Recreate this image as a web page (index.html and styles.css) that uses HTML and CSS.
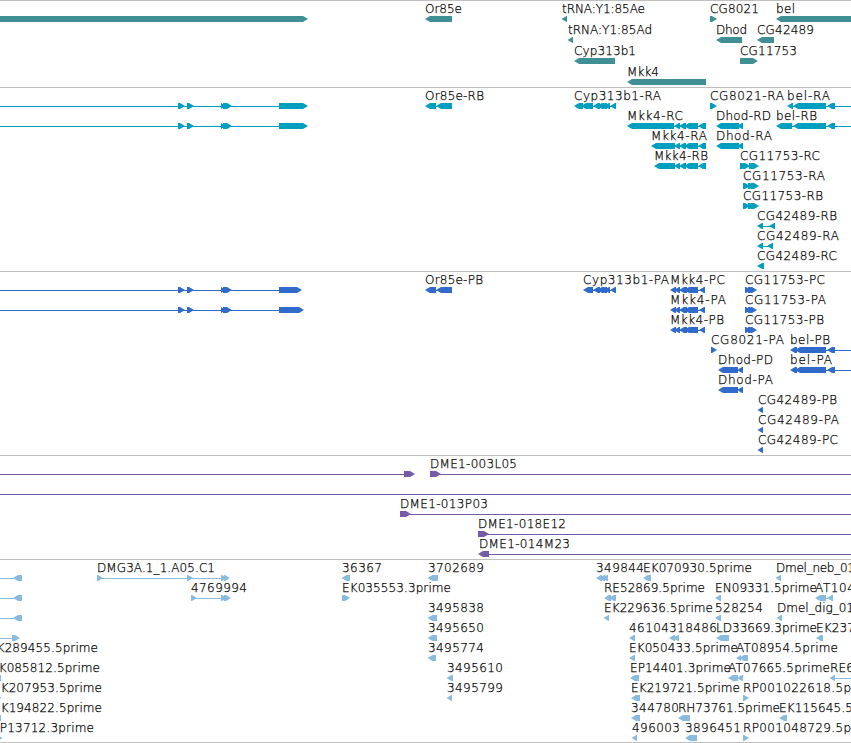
FILE: index.html
```
<!DOCTYPE html>
<html lang="en">
<head>
    <meta charset="UTF-8">
    <meta name="viewport" content="width=device-width, initial-scale=1.0">
    <title>Genome Browser</title>
    <link rel="stylesheet" href="styles.css">
</head>
<body>
    <main class="browser">
        <section class="track genes"><svg id="genes" width="851" height="86"></svg></section>
        <section class="track transcripts"><svg id="transcripts" width="851" height="183"></svg></section>
        <section class="track proteins"><svg id="proteins" width="851" height="183"></svg></section>
        <section class="track clones"><svg id="clones" width="851" height="103"></svg></section>
        <section class="track ests"><svg id="ests" width="851" height="182"></svg></section>
    </main>
    <script src="tracks.js"></script>
</body>
</html>
```

FILE: styles.css
```
body {
    margin: 0;
    background: #fff;
    overflow: hidden;
}
.browser {
    display: flex;
    flex-direction: column;
    width: 851px;
}
.track {
    border-top: 1px solid #bfbfbf;
}
.track:last-child {
    border-bottom: 1px solid #bfbfbf;
}
.track svg {
    display: block;
    overflow: hidden;
}
.label {
    font-family: "DejaVu Sans", sans-serif;
    font-size: 12px;
    font-weight: 200;
    fill: #000;
    stroke: #000;
    stroke-width: 0.25px;
}
.genes {
    color: #3f8f94;
}
.transcripts {
    color: #009fbf;
}
.proteins {
    color: #306acb;
}
.clones {
    color: #7659a9;
}
.ests {
    color: #88bbdd;
}
.exon, .intron {
    fill: currentColor;
}
```

FILE: tracks.js
```
// feature: [row, direction, exons, label, label start, label end, line start, line end]
const END = 860;
const small = [[178, 185], [187, 194], [221, 226], [223, 232]];
const mkkR = [[674, 680], [679, 686], [684, 698], [698, 706]];
const mkkP = [[670, 676], [674, 680], [679, 687], [684, 698], [699, 705]];
const cgR = [[743, 750], [748, 755], [751, 759]];
const cgP = [[745, 751], [748, 755], [751, 757]];

const tracks = {
    genes: [
        [0, ">", [[-10, 308]]],
        [0, "<", [[425, 452]], "Or85e", 425, 462],
        [0, "<", [[561.5, 567]], "tRNA:Y1:85Ae", 562, 645],
        [0, ">", [[710, 717]], "CG8021", 710, 759],
        [0, "<", [[776, END]], "bel", 776, 795],
        [1, "<", [[567.5, 573]], "tRNA:Y1:85Ad", 568, 652],
        [1, "<", [[716, 742]], "Dhod", 716, 747],
        [1, "<", [[757, 774]], "CG42489", 757, 814],
        [2, "<", [[574, 615]], "Cyp313b1", 574, 636],
        [2, ">", [[740, 758]], "CG11753", 740, 797],
        [3, "<", [[627, 706]], "Mkk4", 627, 659]
    ],
    transcripts: [
        [0, ">", [...small, [279, 308]], "", 0, 0, -10, 279],
        [1, ">", [...small, [279, 308]], "", 0, 0, -10, 279],
        [0, "<", [[425, 436], [436, 452]], "Or85e-RB", 425, 484, 430, 440],
        [0, "<", [[574, 583], [581, 593], [593, 600], [597, 604], [600, 607], [604, 610], [610, 616]], "Cyp313b1-RA", 574, 661, 576, 614],
        [0, ">", [[710, 717]], "CG8021-RA", 710, 784],
        [0, "<", [[787, 793], [793, 826], [827, 835]], "bel-RA", 787, 830, 790, END],
        [1, "<", [[627, 674], ...mkkR], "Mkk4-RC", 627, 683, 670, 704],
        [1, "<", [[716, 739], [737, 743]], "Dhod-RD", 716, 771],
        [1, "<", [[776, 792], [793, 826], [827, 835]], "bel-RB", 776, 817, 780, END],
        [2, "<", [[651, 675], ...mkkR], "Mkk4-RA", 651, 707, 670, 704],
        [2, "<", [[716, 739], [737, 743]], "Dhod-RA", 716, 772],
        [3, "<", [[654, 675], ...mkkR], "Mkk4-RB", 654, 708, 670, 704],
        [3, ">", [[740, 747], [743, 750], [749, 755], [751, 759]], "CG11753-RC", 740, 820, 740, 756],
        [4, ">", cgR, "CG11753-RA", 743, 825],
        [5, ">", cgR, "CG11753-RB", 743, 823],
        [6, "<", [[757, 763], [769, 775]], "CG42489-RB", 757, 837, 760, 772],
        [7, "<", [[757, 763], [767, 773]], "CG42489-RA", 757, 839, 760, 770],
        [8, "<", [[757, 764]], "CG42489-RC", 757, 837]
    ],
    proteins: [
        [0, ">", [...small, [279, 302]], "", 0, 0, -10, 279],
        [1, ">", [...small, [279, 304]], "", 0, 0, -10, 279],
        [0, "<", [[425, 436], [436, 452]], "Or85e-PB", 425, 483, 430, 440],
        [0, "<", [[583, 593], [593, 600], [597, 604], [600, 607], [604, 610], [610, 616]], "Cyp313b1-PA", 583, 669, 585, 614],
        [0, "<", mkkP, "Mkk4-PC", 670, 725, 672, 704],
        [1, "<", mkkP, "Mkk4-PA", 670, 726, 672, 704],
        [2, "<", mkkP, "Mkk4-PB", 670, 724, 672, 704],
        [0, ">", cgP, "CG11753-PC", 745, 825],
        [1, ">", cgP, "CG11753-PA", 745, 826],
        [2, ">", cgP, "CG11753-PB", 745, 824],
        [3, ">", [[711, 717]], "CG8021-PA", 711, 784],
        [3, "<", [[790, 797], [795, 826], [827, 835]], "bel-PB", 790, 830, 793, END],
        [4, "<", [[718, 738], [737, 743]], "Dhod-PD", 718, 773],
        [4, "<", [[790, 797], [795, 826], [827, 835]], "bel-PA", 790, 832, 793, END],
        [5, "<", [[718, 738], [737, 743]], "Dhod-PA", 718, 773],
        [6, "<", [[757.5, 763]], "CG42489-PB", 758, 837],
        [7, "<", [[757.5, 763]], "CG42489-PA", 758, 839],
        [8, "<", [[757.5, 763]], "CG42489-PC", 758, 838]
    ],
    clones: [
        [0, ">", [[404, 415]], "", 0, 0, -10, 405],
        [0, ">", [[430, 441]], "DME1-003L05", 430, 517, 436, END],
        [1, ">", [], "", 0, 0, -10, END],
        [2, ">", [[400, 411]], "DME1-013P03", 400, 488, 406, END],
        [3, ">", [[478, 489]], "DME1-018E12", 478, 566, 484, END],
        [4, "<", [[478, 489]], "DME1-014M23", 479, 570, 485, END]
    ],
    ests: [
        [0, "<", [[13, 22]], "", 0, 0, -10, 16],
        [1, "<", [[13, 22]], "", 0, 0, -10, 16],
        [2, "<", [[13, 22]], "", 0, 0, -10, 16],
        [3, ">", [[12, 20]], "", 0, 0, -10, 14],
        [0, ">", [[97, 103], [187, 193], [221, 227], [224, 230]], "DMG3A.1_1.A05.C1", 97, 215, 98, 228],
        [1, ">", [[191, 197], [221, 227], [224, 231]], "4769994", 191, 247, 192, 228],
        [0, "<", [[341.5, 350]], "36367", 342, 382],
        [1, ">", [[342, 350]], "EK035553.3prime", 342, 451],
        [0, "<", [[427.5, 438]], "3702689", 428, 484],
        [2, "<", [[427.5, 437]], "3495838", 428, 484],
        [3, "<", [[427.5, 437]], "3495650", 428, 484],
        [4, "<", [[427.5, 436]], "3495774", 428, 484],
        [5, "<", [[446.5, 453]], "3495610", 447, 503],
        [6, "<", [[446.5, 452]], "3495799", 447, 503],
        [4, "<", [], "EK289455.5prime", -11, 98],
        [5, "<", [[-5, 1]], "EK085812.5prime", -9, 100],
        [6, ">", [[-5, 1.5]], "EK207953.5prime", -7, 102],
        [7, "<", [[-5, 1]], "EK194822.5prime", -7, 102],
        [8, ">", [[-5, 2.5]], "EP13712.3prime", -8, 94],
        [0, "<", [[596, 602], [599, 605], [602, 608]], "349844", 596, 644],
        [0, "<", [[643, 651]], "EK070930.5prime", 643, 752],
        [0, "<", [[775.5, 781]], "Dmel_neb_01", 776, 855],
        [1, "<", [[604, 611], [609, 616]], "RE52869.5prime", 604, 705],
        [1, "<", [[715, 721]], "EN09331.5prime", 715, 817],
        [1, "<", [[815, 826], [827, 833]], "AT104", 815, 855, 820, 830],
        [2, "<", [[603.5, 609]], "EK229636.5prime", 604, 713],
        [2, "<", [[715, 721]], "528254", 715, 763],
        [2, "<", [[776.5, 782]], "Dmel_dig_01", 777, 854],
        [3, "<", [[629, 635]], "46104", 629, 669],
        [3, "<", [[669, 675], [673, 679]], "318486", 669, 717],
        [3, "<", [[716, 729]], "LD33669.3prime", 716, 817],
        [3, "<", [[816, 823]], "EK237", 816, 855],
        [4, "<", [[629, 635]], "EK050433.5prime", 629, 738],
        [4, "<", [[736, 741], [739, 748]], "AT08954.5prime", 736, 838],
        [5, "<", [[630, 639]], "EP14401.3prime", 630, 731],
        [5, "<", [[728, 738], [737, 743]], "AT07665.5prime", 728, 830],
        [5, "<", [[829.5, 835]], "RE6", 830, 854, 833, END],
        [6, "<", [[631, 640]], "EK219721.5prime", 631, 740],
        [6, ">", [[743, 749]], "RP001022618.5p", 743, 851],
        [7, "<", [[631, 640]], "344780", 631, 679],
        [7, "<", [[678, 690]], "RH73761.5prime", 678, 780],
        [7, "<", [[779, 787]], "EK115645.5", 779, 853],
        [8, "<", [[631.5, 637]], "496003", 632, 680],
        [8, "<", [[685, 697]], "3896451", 685, 741],
        [8, ">", [[743, 749]], "RP001048729.5p", 743, 851]
    ]
};

function add(svg, name, attrs) {
    const el = document.createElementNS("http://www.w3.org/2000/svg", name);
    for (const key in attrs) {
        el.setAttribute(key, attrs[key]);
    }
    svg.appendChild(el);
    return el;
}

function arrow(a, b, dir, y) {
    const head = Math.min(5, b - a);
    if (dir === "<") {
        return `${b},${y} ${a + head},${y} ${a},${y + 3} ${a + head},${y + 6} ${b},${y + 6}`;
    }
    return `${a},${y} ${b - head},${y} ${b},${y + 3} ${b - head},${y + 6} ${a},${y + 6}`;
}

for (const id in tracks) {
    const svg = document.getElementById(id);
    const rowHeight = id === "genes" ? 21 : 20;

    tracks[id].forEach(([row, dir, exons, label, start, end, from, to]) => {
        const top = row * rowHeight;
        if (to) {
            add(svg, "rect", { class: "intron", x: from, y: top + 18, width: to - from, height: 1 });
        }
        exons.forEach(([a, b]) => {
            add(svg, "polygon", { class: "exon", points: arrow(a, b, dir, top + 15) });
        });
        if (label) {
            const text = add(svg, "text", { class: "label", x: start, y: top + 12, textLength: end - start });
            text.textContent = label;
        }
    });
}
```
